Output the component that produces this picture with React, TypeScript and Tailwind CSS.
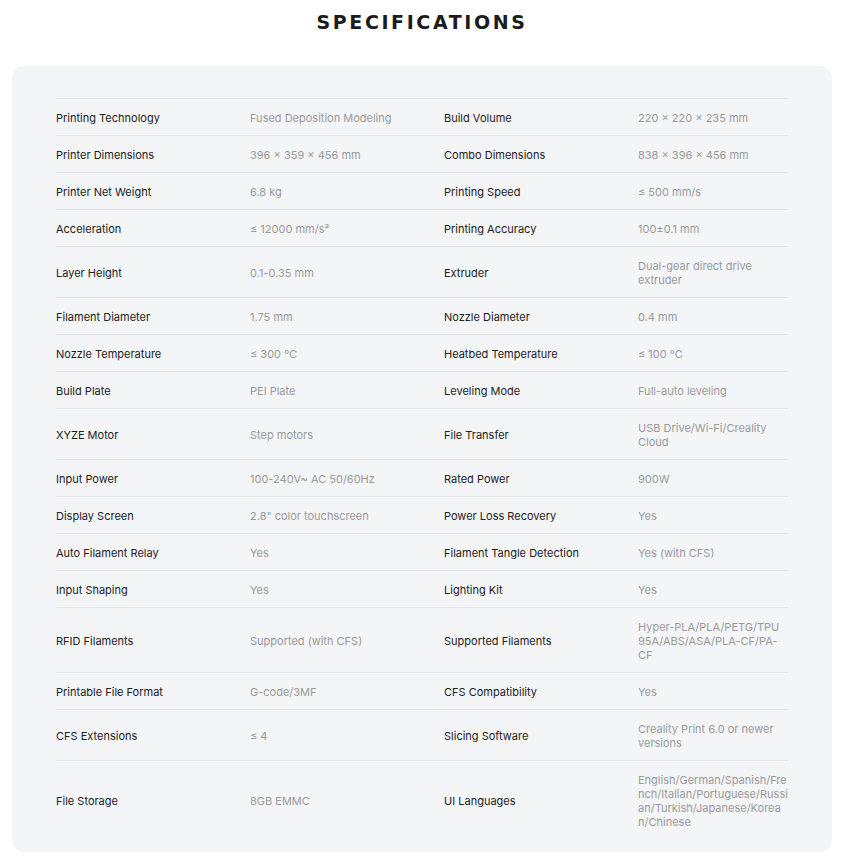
import React from 'react';

type Spec = [string, string, string, string];

const specs: Spec[] = [
  ['Printing Technology', 'Fused Deposition Modeling', 'Build Volume', '220 × 220 × 235 mm'],
  ['Printer Dimensions', '396 × 359 × 456 mm', 'Combo Dimensions', '838 × 396 × 456 mm'],
  ['Printer Net Weight', '6.8 kg', 'Printing Speed', '≤ 500 mm/s'],
  ['Acceleration', '≤ 12000 mm/s²', 'Printing Accuracy', '100±0.1 mm'],
  ['Layer Height', '0.1-0.35 mm', 'Extruder', 'Dual-gear direct drive extruder'],
  ['Filament Diameter', '1.75 mm', 'Nozzle Diameter', '0.4 mm'],
  ['Nozzle Temperature', '≤ 300 ℃', 'Heatbed Temperature', '≤ 100 ℃'],
  ['Build Plate', 'PEI Plate', 'Leveling Mode', 'Full-auto leveling'],
  ['XYZE Motor', 'Step motors', 'File Transfer', 'USB Drive/Wi-Fi/Creality Cloud'],
  ['Input Power', '100-240V~ AC 50/60Hz', 'Rated Power', '900W'],
  ['Display Screen', '2.8" color touchscreen', 'Power Loss Recovery', 'Yes'],
  ['Auto Filament Relay', 'Yes', 'Filament Tangle Detection', 'Yes (with CFS)'],
  ['Input Shaping', 'Yes', 'Lighting Kit', 'Yes'],
  ['RFID Filaments', 'Supported (with CFS)', 'Supported Filaments', 'Hyper-PLA/PLA/PETG/TPU 95A/ABS/ASA/PLA-CF/PA-CF'],
  ['Printable File Format', 'G-code/3MF', 'CFS Compatibility', 'Yes'],
  ['CFS Extensions', '≤ 4', 'Slicing Software', 'Creality Print 6.0 or newer versions'],
  ['File Storage', '8GB EMMC', 'UI Languages', 'English/German/Spanish/French/Italian/Portuguese/Russian/Turkish/Japanese/Korean/Chinese'],
];

export default function App() {
  return (
    <div className="min-h-screen bg-white font-['Inter',sans-serif]">
      <h1 className="w-[820px] ml-[12px] pt-[9px] h-[66px] text-center font-['DejaVu_Sans',sans-serif] text-[19px] leading-[27px] font-bold tracking-[2.6px] text-[#1c1c1c]">
        SPECIFICATIONS
      </h1>

      {/* Spec table panel */}
      <div className="w-[820px] ml-[12px] bg-[#f4f5f7] rounded-[12px] px-[44px] pt-[32px] pb-[13px]">
        <div className="w-[732px]">
          {specs.map(([l1, v1, l2, v2]) => (
            <div
              key={l1}
              className="grid grid-cols-[194px_194px_194px_150px] items-center border-t border-[#e6e7ea] pt-[12px] pb-[10px] text-[11px] leading-[14px]"
            >
              <div className="text-[#222]">{l1}</div>
              <div className="text-[#9a9a9a] pr-[10px]">{v1}</div>
              <div className="text-[#222]">{l2}</div>
              <div className={l2 === 'UI Languages' ? 'text-[#9a9a9a] break-all' : 'text-[#9a9a9a] pr-[4px]'}>{v2}</div>
            </div>
          ))}
        </div>
      </div>
    </div>
  );
}
